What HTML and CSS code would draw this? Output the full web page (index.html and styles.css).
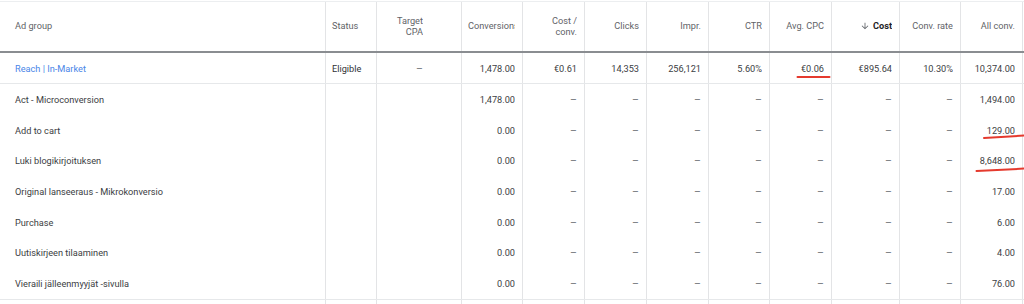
FILE: index.html
```html
<!DOCTYPE html>
<html>
<head>
<meta charset="utf-8">
<link rel="stylesheet" href="styles.css">
</head>
<body>
<div class="table">
  <div class="row head">
    <div class="c name"><span>Ad group</span></div>
    <div class="c status"><span>Status</span></div>
    <div class="c num tcpa"><div class="t">Target<br>CPA</div></div>
    <div class="c num"><div class="t">Conversions</div></div>
    <div class="c num"><div class="t">Cost /<br>conv.</div></div>
    <div class="c num"><div class="t">Clicks</div></div>
    <div class="c num"><div class="t">Impr.</div></div>
    <div class="c num"><div class="t">CTR</div></div>
    <div class="c num"><div class="t">Avg. CPC</div></div>
    <div class="c num"><div class="t sorted"><svg class="arrow" viewBox="0 0 24 24"><path d="M20 12l-1.41-1.41L13 16.17V4h-2v12.17l-5.58-5.59L4 12l8 8 8-8z"/></svg><b>Cost</b></div></div>
    <div class="c num"><div class="t">Conv. rate</div></div>
    <div class="c num last"><div class="t">All conv.</div></div>
  </div>
  <div class="row main">
    <div class="c name"><span class="link">Reach | In-Market</span></div>
    <div class="c status"><span class="dark">Eligible</span></div>
    <div class="c num tcpa"><div class="t dash">–</div></div>
    <div class="c num"><div class="t">1,478.00</div></div>
    <div class="c num"><div class="t">€0.61</div></div>
    <div class="c num"><div class="t">14,353</div></div>
    <div class="c num"><div class="t">256,121</div></div>
    <div class="c num"><div class="t">5.60%</div></div>
    <div class="c num"><div class="t">€0.06</div></div>
    <div class="c num"><div class="t">€895.64</div></div>
    <div class="c num"><div class="t">10.30%</div></div>
    <div class="c num last"><div class="t">10,374.00</div></div>
  </div>
  <div class="rows" id="rows"></div>
  <div class="row filler">
    <div class="c name"></div><div class="c"></div><div class="c"></div><div class="c"></div><div class="c"></div><div class="c"></div><div class="c"></div><div class="c"></div><div class="c"></div><div class="c"></div><div class="c"></div><div class="c last"></div>
  </div>
</div>
<svg class="marks" width="1024" height="304" viewBox="0 0 1024 304">
  <line x1="797.5" y1="77" x2="829.5" y2="77"/>
  <line x1="984" y1="138" x2="1024" y2="135.6"/>
  <line x1="976.5" y1="171" x2="1024" y2="168.6"/>
</svg>
<script src="script.js"></script>
</body>
</html>
```
FILE: styles.css
```css
html, body {
  margin: 0;
  padding: 0;
  background: #ffffff;
}
body {
  font-family: Roboto, "Liberation Sans", Arial, sans-serif;
  font-size: 9.2px;
  color: #3c4043;
  width: 1024px;
  height: 304px;
  overflow: hidden;
  position: relative;
}
.table {
  margin-top: 1px;
  border-top: 1px solid #eceef0;
  width: 1024px;
}
.row {
  box-sizing: border-box;
  display: grid;
  grid-template-columns: 325px 51px 85px 61px 62px 62px 62px 61px 62px 68px 61px 63px;
}
.c {
  box-sizing: border-box;
  border-left: 1px solid #e3e4e6;
  display: flex;
  align-items: center;
  min-width: 0;
}
.c.name {
  border-left: none;
  padding-left: 15px;
}
.c.last {
  border-right: 1px solid #e3e4e6;
}
.c.status {
  padding-left: 6px;
}
.c.num {
  padding: 0 7px 0 6px;
}
.c.num.tcpa {
  padding-right: 38px;
}
.t {
  width: 100%;
  text-align: right;
  overflow: hidden;
  white-space: nowrap;
}
.head {
  height: 51px;
  border-bottom: 2px solid #8a8d91;
  color: #5f6368;
  line-height: 10.7px;
}
.head .t b {
  font-weight: 700;
  color: #202124;
}
.sorted {
  display: flex;
  justify-content: flex-end;
  align-items: center;
}
.arrow {
  width: 10px;
  height: 10px;
  fill: #5f6368;
  margin-right: 3px;
}
.main {
  height: 31px;
  border-bottom: 1px solid #e6e8ea;
}
.link {
  color: #4a86e8;
}
.dark {
  color: #303134;
}
.dash {
  color: #6f7378;
  font-size: 10.5px;
}
.rows .row {
  height: 30.7px;
}
.rows {
  border-bottom: 1px solid #e6e8ea;
}
.filler {
  height: 10px;
}
.marks {
  position: absolute;
  left: 0;
  top: 0;
  pointer-events: none;
}
.marks line {
  stroke: #e53a2e;
  stroke-width: 2;
  stroke-linecap: round;
}
```
FILE: script.js
```js
const data = [
  ["Act - Microconversion", "1,478.00", "1,494.00"],
  ["Add to cart", "0.00", "129.00"],
  ["Luki blogikirjoituksen", "0.00", "8,648.00"],
  ["Original lanseeraus - Mikrokonversio", "0.00", "17.00"],
  ["Purchase", "0.00", "6.00"],
  ["Uutiskirjeen tilaaminen", "0.00", "4.00"],
  ["Vieraili jälleenmyyjät -sivulla", "0.00", "76.00"]
];
const wrap = document.getElementById("rows");
for (const [name, conv, all] of data) {
  const row = document.createElement("div");
  row.className = "row";
  let html = '<div class="c name"><span>' + name + '</span></div>';
  html += '<div class="c status"></div><div class="c num tcpa"></div>';
  html += '<div class="c num"><div class="t">' + conv + '</div></div>';
  for (let i = 0; i < 7; i++) {
    html += '<div class="c num"><div class="t dash">–</div></div>';
  }
  html += '<div class="c num last"><div class="t">' + all + '</div></div>';
  row.innerHTML = html;
  wrap.appendChild(row);
}
```
